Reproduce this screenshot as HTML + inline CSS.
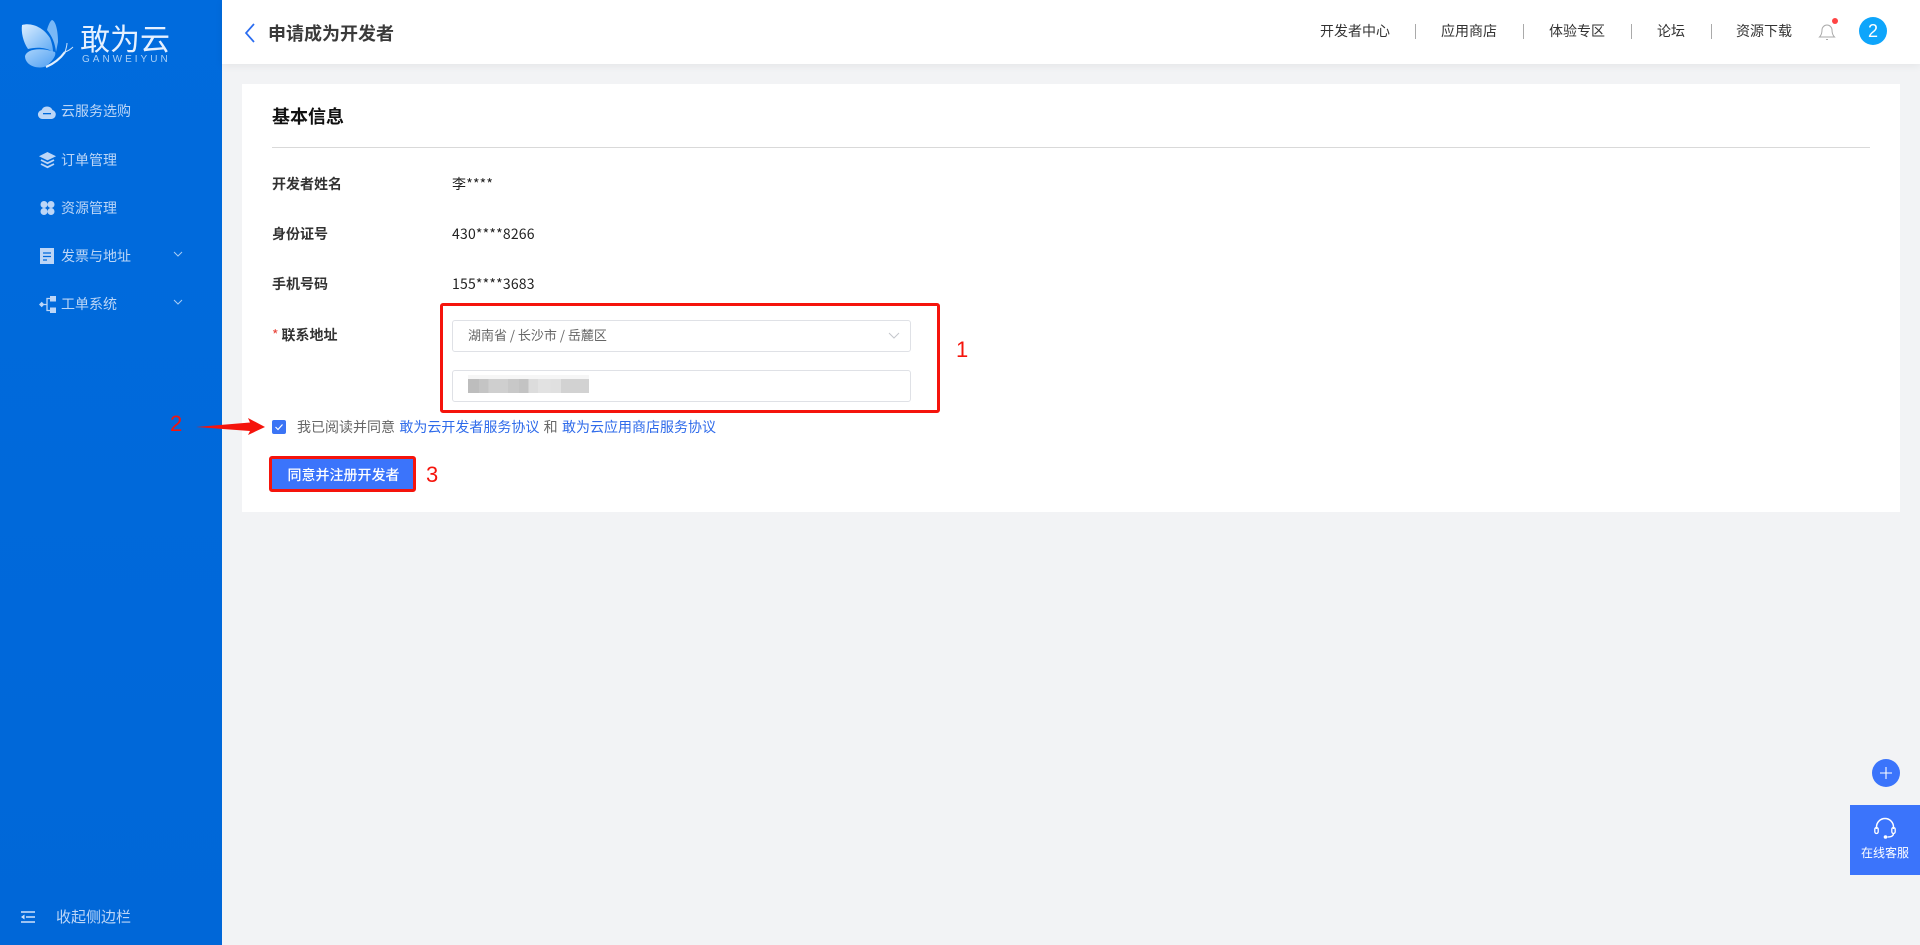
<!DOCTYPE html>
<html lang="zh"><head><meta charset="utf-8"><title>申请成为开发者</title>
<style>
*{box-sizing:border-box}
html,body{margin:0;padding:0;width:1920px;height:945px;overflow:hidden;background:#f2f3f5;font-family:"Noto Sans CJK SC","Liberation Sans",sans-serif;color:#222}
.a{position:absolute;white-space:nowrap}
#side{position:absolute;left:0;top:0;width:222px;height:945px;background:linear-gradient(#006bdd,#0067d8)}
.m{position:absolute;left:61px;font-size:14px;line-height:20px;color:#bcd6f7}
.i{position:absolute;left:36px;width:24px;height:24px}
.c{position:absolute;left:172px;width:12px;height:8px}
#top{position:absolute;left:222px;top:0;width:1698px;height:64px;background:#fff;box-shadow:0 2px 8px rgba(0,0,0,.06)}
.n{position:absolute;top:21px;font-size:14px;line-height:20px;color:#333}
.s{position:absolute;top:24px;width:1px;height:15px;background:#aaa}
#card{position:absolute;left:242px;top:84px;width:1658px;height:428px;background:#fff}
.l{position:absolute;left:272px;font-size:14px;font-weight:700;line-height:20px;color:#333}
.v{position:absolute;left:452px;font-size:14px;line-height:20px;color:#222;letter-spacing:.2px}
.f{position:absolute;left:452px;width:459px;height:32px;border:1px solid #dfe1e6;border-radius:3px;background:#fff}
.r{position:absolute;color:#f5140c;font-family:"Liberation Sans",sans-serif;font-size:22px;line-height:24px}
</style></head><body>
<div id="side">
<svg class="a" style="left:20px;top:18px" width="56" height="52" viewBox="0 0 56 52">
<defs>
<linearGradient id="g" x1="0" y1="0" x2="1" y2="1"><stop offset="0" stop-color="#dceeff"/><stop offset="1" stop-color="#5ea9f4"/></linearGradient>
<linearGradient id="h" x1="0" y1="0" x2="1" y2="1"><stop offset="0" stop-color="#a9d3fb"/><stop offset="1" stop-color="#4f9ff2"/></linearGradient>
</defs>
<path d="M32 2C36 3 38 14 38 24L36 34C35 25 32 18 27 12 28 8 30 3 32 2Z" fill="#79b8f6"/>
<path d="M2 7C12 4 24 10 30 20 32 25 33 30 33 34 26 29 16 29 8 31 3 24 1 14 2 7Z" fill="url(#g)"/>
<path d="M5 38C7 31 20 29 35 34 37 38 30 46 24 49 14 51 5 46 5 38Z" fill="url(#h)"/>
<path d="M26 49C33 46 40 41 45 34" stroke="#e3f0fd" stroke-width="2.200" fill="none"/>
<path d="M45 34C46 31 47 28 47 25M45 34C48 33 51 31 53 29" stroke="#cfe4fb" stroke-width="1" fill="none"/>
</svg>
<div class="a" style="left:80px;top:15px;font-size:30px;line-height:44px;font-weight:400;color:#e6f1ff">敢为云</div>
<div class="a" style="left:82px;top:53px;font-family:'Liberation Sans',sans-serif;font-size:10px;line-height:14px;color:#a9d0f7;letter-spacing:3px">GANWEIYUN</div>

<svg class="i" style="top:100px" viewBox="0 0 24 24"><path d="M6.500 19a4.500 4.500 0 0 1-1-8.900A6 6 0 0 1 16.500 10 4.600 4.600 0 0 1 15.500 19Z" fill="#bcd6f7"/><rect x="7" y="13" width="8" height="1.300" fill="#0069db"/></svg>
<div class="m" style="top:101px">云服务选购</div>
<svg class="i" style="top:148px" viewBox="0 0 24 24" fill="none" stroke="#bcd6f7" stroke-width="1.800"><path d="M11.500 5l6.500 3.200-6.500 3.200L5 8.200Z" fill="#bcd6f7"/><path d="M5 12l6.500 3.200L18 12M5 16l6.500 3.200L18 16"/></svg>
<div class="m" style="top:150px">订单管理</div>
<svg class="i" style="top:196px" viewBox="0 0 24 24" fill="#bcd6f7"><circle cx="8" cy="8.500" r="3.500"/><circle cx="15" cy="8.500" r="3.500"/><circle cx="8" cy="15.500" r="3.500"/><circle cx="15" cy="15.500" r="3.500"/></svg>
<div class="m" style="top:198px">资源管理</div>
<svg class="i" style="top:244px" viewBox="0 0 24 24"><rect x="4" y="4" width="14" height="16" fill="#bcd6f7"/><path d="M7 9h8M7 12.500h8M7 16h4" stroke="#0069db" stroke-width="1.300"/></svg>
<div class="m" style="top:246px">发票与地址</div>
<svg class="c" style="top:250px" viewBox="0 0 12 8"><path d="M2 2l4 4 4-4" fill="none" stroke="#a9cdf5" stroke-width="1"/></svg>
<svg class="i" style="top:292px" viewBox="0 0 24 24" fill="#bcd6f7"><path d="M3 12.500l2.700-2.700 2.700 2.700-2.700 2.700Z"/><rect x="14" y="4" width="6" height="5.500"/><rect x="14" y="15.500" width="6" height="5.500"/><path d="M8 12.500h3M14 6.500h-3v12h3" fill="none" stroke="#bcd6f7" stroke-width="1.300"/></svg>
<div class="m" style="top:294px">工单系统</div>
<svg class="c" style="top:298px" viewBox="0 0 12 8"><path d="M2 2l4 4 4-4" fill="none" stroke="#a9cdf5" stroke-width="1"/></svg>

<svg class="a" style="left:20px;top:910px" width="16" height="14" viewBox="0 0 16 14"><path d="M1 2h14M6 7h9M1 12h14" stroke="#cfe2fa" stroke-width="1.400"/><path d="M1 7l3.500-2.500v5Z" fill="#cfe2fa"/></svg>
<div class="m" style="left:56px;top:907px;font-size:15px">收起侧边栏</div>
</div>

<div id="top"></div>
<svg class="a" style="left:243px;top:22px" width="14" height="22" viewBox="0 0 14 22"><path d="M11 2L3 11l8 9" fill="none" stroke="#2a6cf0" stroke-width="1.700"/></svg>
<div class="a" style="left:268px;top:21px;font-size:18px;line-height:24px;font-weight:700;color:#3a3a3a">申请成为开发者</div>
<div class="n" style="left:1320px">开发者中心</div><div class="s" style="left:1415px"></div>
<div class="n" style="left:1441px">应用商店</div><div class="s" style="left:1523px"></div>
<div class="n" style="left:1549px">体验专区</div><div class="s" style="left:1631px"></div>
<div class="n" style="left:1657px">论坛</div><div class="s" style="left:1711px"></div>
<div class="n" style="left:1736px">资源下载</div>
<svg class="a" style="left:1817px;top:20px" width="20" height="22" viewBox="0 0 20 22"><path d="M2.500 17c1.500-1.500 2.500-3 2.500-7a5 5 0 0 1 10 0c0 4 1 5.500 2.500 7ZM9 19.500h2" fill="none" stroke="#aaa" stroke-width="1"/></svg>
<div class="a" style="left:1832px;top:18px;width:6px;height:6px;border-radius:50%;background:#f44"></div>
<div class="a" style="left:1859px;top:17px;width:28px;height:28px;border-radius:50%;background:#0ea5fb;color:#fff;font-family:'Liberation Sans',sans-serif;font-size:18px;line-height:28px;text-align:center">2</div>

<div id="card"></div>
<div class="a" style="left:272px;top:103px;font-size:18px;line-height:26px;font-weight:700;color:#111">基本信息</div>
<div class="a" style="left:272px;top:147px;width:1598px;height:1px;background:#d9d9d9"></div>

<div class="l" style="top:174px">开发者姓名</div><div class="v" style="top:174px">李****</div>
<div class="l" style="top:224px">身份证号</div><div class="v" style="top:224px">430****8266</div>
<div class="l" style="top:274px">手机号码</div><div class="v" style="top:274px">155****3683</div>
<div class="l" style="top:325px"><span style="color:#e8443a;margin-right:3px;font-weight:400">*</span>联系地址</div>

<div class="f" style="top:320px"></div>
<div class="a" style="left:468px;top:325px;font-size:13px;line-height:20px;color:#666">湖南省 / 长沙市 / 岳麓区</div>
<svg class="a" style="left:887px;top:331px" width="14" height="10" viewBox="0 0 14 10"><path d="M2 2l5 5 5-5" fill="none" stroke="#c4c7cc" stroke-width="1"/></svg>
<div class="f" style="top:370px"></div>
<div class="a" style="left:468px;top:379px;width:121px;height:14px;background:linear-gradient(90deg,#bdbdbd 0 9%,#c4c4c4 9% 17%,#cfcfcf 17% 33%,#c8c8c8 33% 42%,#c3c3c3 42% 50%,#dcdcdc 50% 58%,#e2e2e2 58% 68%,#e0e0e0 68% 77%,#d2d2d2 77% 100%)"></div>
<div class="a" style="left:468px;top:375px;width:121px;height:4px;background:#f6f6f6"></div>

<div class="a" style="left:440px;top:303px;width:500px;height:110px;border:3px solid #f5140c;border-radius:3px"></div>
<div class="r" style="left:956px;top:338px">1</div>

<svg class="a" style="left:196px;top:416px" width="70" height="22" viewBox="0 0 70 22"><path d="M0 11L54 6.500 52 2 69 11 52 19 54 15Z" fill="#f5140c"/></svg>
<div class="r" style="left:170px;top:412px">2</div>
<div class="a" style="left:272px;top:420px;width:14px;height:14px;border-radius:2px;background:#3b74f5"></div>
<svg class="a" style="left:272px;top:420px" width="14" height="14" viewBox="0 0 14 14"><path d="M3.500 7l2.500 2.500 4.500-5" fill="none" stroke="#fff" stroke-width="1.200"/></svg>
<div class="a" style="left:297px;top:417px;font-size:14px;line-height:20px;color:#666;word-spacing:1.200px">我已阅读并同意 <span style="color:#2f6bea">敢为云开发者服务协议</span> 和 <span style="color:#2f6bea">敢为云应用商店服务协议</span></div>

<div class="a" style="left:270px;top:456px;width:147px;height:36px;background:#3b74fb;border:3px solid #f5140c;border-radius:3px;color:#fff;font-size:14px;font-weight:500;line-height:32px;text-align:center;left:269px;text-indent:2px">同意并注册开发者</div>
<div class="r" style="left:426px;top:463px">3</div>

<div class="a" style="left:1872px;top:759px;width:28px;height:28px;border-radius:50%;background:#3b74fb"></div>
<svg class="a" style="left:1872px;top:759px" width="28" height="28" viewBox="0 0 28 28"><path d="M8 14h12M14 8v12" stroke="#fff" stroke-width="1.100"/></svg>
<div class="a" style="left:1850px;top:805px;width:70px;height:70px;background:#3b74fb"></div>
<svg class="a" style="left:1872px;top:815px" width="26" height="26" viewBox="0 0 26 26"><path d="M4.500 14v-2a8.500 8.500 0 0 1 17 0v2" fill="none" stroke="#fff" stroke-width="1.500"/><rect x="2.800" y="12.500" width="3.400" height="6" rx="1.700" fill="none" stroke="#fff" stroke-width="1.300"/><rect x="19.800" y="12.500" width="3.400" height="6" rx="1.700" fill="none" stroke="#fff" stroke-width="1.300"/><path d="M21.500 18.500c0 2.500-2.500 3.500-6 3.500" fill="none" stroke="#fff" stroke-width="1.300"/><circle cx="13.500" cy="22" r="1.800" fill="#fff"/></svg>
<div class="a" style="left:1850px;top:843px;width:70px;text-align:center;font-size:12px;line-height:20px;color:#fff">在线客服</div>
</body></html>
